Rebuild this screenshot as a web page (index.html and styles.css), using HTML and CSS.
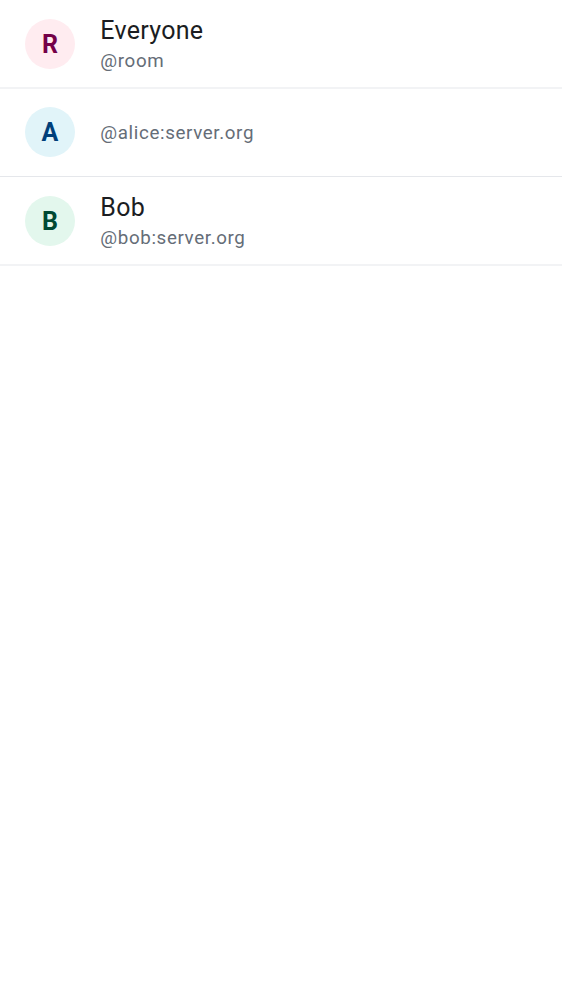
FILE: index.html
```html
<!DOCTYPE html>
<html lang="en">
<head>
<meta charset="utf-8">
<title>Mentions</title>
<link rel="stylesheet" href="styles.css">
</head>
<body>
<ul class="list">
  <li class="row soft">
    <span class="avatar pink">R</span>
    <div class="text"><div class="name">Everyone</div><div class="id">@room</div></div>
  </li>
  <li class="row">
    <span class="avatar blue">A</span>
    <div class="text single"><div class="id">@alice:server.org</div></div>
  </li>
  <li class="row soft">
    <span class="avatar green">B</span>
    <div class="text"><div class="name">Bob</div><div class="id">@bob:server.org</div></div>
  </li>
</ul>
</body>
</html>
```
FILE: styles.css
```css
body {
  margin: 0;
  background: #fff;
  font-family: Roboto, sans-serif;
}
.list {
  margin: 0;
  padding: 0;
  list-style: none;
}
.row {
  box-sizing: border-box;
  height: 88px;
  display: flex;
  align-items: center;
  gap: 25.3px;
  padding: 0 25px 1px;
  border-bottom: 1px solid #e5e7eb;
}
.soft {
  height: 89px;
  padding: 1px 25px 0;
  border-bottom: 2px solid #f2f3f5;
}
.avatar {
  box-sizing: border-box;
  width: 50px;
  height: 50px;
  padding-top: 1px;
  flex: none;
  display: flex;
  align-items: center;
  justify-content: center;
  border-radius: 50%;
  font-size: 25px;
  font-weight: 700;
}
.pink { background: #ffecf0; color: #740148; }
.blue { background: #e1f4f9; color: #003f7a; }
.green { background: #e3f7ed; color: #004933; }
.single { padding-top: 2px; }
.name {
  font-size: 25px;
  line-height: 34px;
  letter-spacing: 0.28px;
  color: #1b1d22;
}
.id {
  font-size: 18.75px;
  line-height: 26px;
  letter-spacing: 0.63px;
  color: #656d77;
}
```
